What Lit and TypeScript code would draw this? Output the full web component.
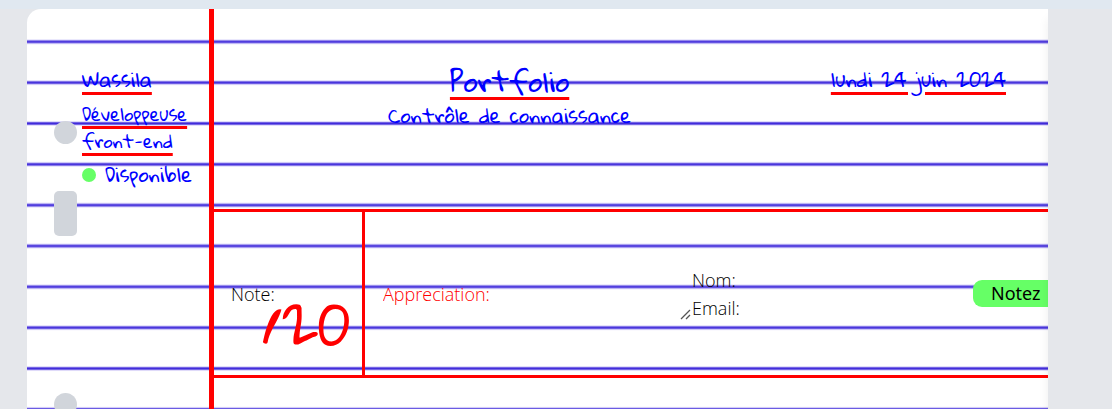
import { LitElement, html, css } from "lit";
import { customElement } from "lit/decorators.js";

@customElement("app-root")
export class AppRoot extends LitElement {
  static styles = css`
    :host {
      display: grid;
      grid-template-rows: 9px 1fr;
      height: 100vh;
      overflow: hidden;
      background: #e5e7eb;
      font-family: "Segoe UI", "Open Sans", "Noto Sans", sans-serif;
      font-size: 18px;
      line-height: 28px;
      color: #000;
    }
    * { box-sizing: border-box; }
    h1, h2, p { margin: 0; font-weight: 400; }
    .topbar { background: #e0e8f0; }
    .desk {
      display: grid;
      grid-template-columns: 27px minmax(0, 1fr) 64px;
      min-height: 0;
    }
    .sheet {
      position: relative;
      display: grid;
      grid-template-columns: 182px 5px minmax(0, 1fr);
      grid-column: 2;
      background: #fff;
      border-radius: 14px 0 0 0;
      overflow: hidden;
      min-height: 0;
    }
    .rules {
      position: absolute;
      inset: 0;
      width: 100%;
      height: 100%;
    }
    .edge {
      grid-column: 3;
      background: #e5e7eb;
      box-shadow: 0 10px 10px rgba(0, 0, 0, 0.07);
      z-index: 1;
    }
    .margin {
      position: relative;
      display: grid;
      grid-template-columns: 23px 1fr;
      gap: 5px;
      padding-left: 27px;
    }
    .holes {
      display: flex;
      flex-direction: column;
      padding-top: 112px;
    }
    .hole {
      flex: none;
      height: 23px;
      border-radius: 50%;
      background: #d1d5db;
    }
    .slot {
      flex: none;
      height: 45px;
      margin: 47px 0 157px;
      border-radius: 5px;
      background: #d1d5db;
    }
    .redline { position: relative; background: #f00; }
    .hand {
      font-family: "Gloria Hallelujah", "Lato", sans-serif;
      font-weight: 400;
      color: #00f;
    }
    .under {
      text-decoration: underline 3px #f00;
      text-underline-offset: 5px;
    }
    .who {
      padding-top: 56px;
      line-height: 27px;
      font-size: 18px;
    }
    .name { font-size: 20px; line-height: 28px; }
    .job { padding-top: 7px; }
    .free {
      display: flex;
      align-items: center;
      gap: 9px;
      padding-top: 7px;
      font-size: 20px;
    }
    .dot {
      width: 14px;
      height: 14px;
      border-radius: 50%;
      background: #6f6;
    }
    .content { position: relative; min-width: 0; }
    .head {
      display: flex;
      justify-content: space-between;
      height: 200px;
      padding: 56px 42px 0 174px;
    }
    .titles { text-align: center; }
    .title { font-size: 28px; line-height: 32px; }
    .subtitle { font-size: 20px; line-height: 36px; white-space: nowrap; }
    .date {
      font-size: 20px;
      line-height: 28px;
      white-space: nowrap;
    }
    .grade {
      display: grid;
      grid-template-columns: 151px minmax(0, 1fr);
      height: 169px;
      border-top: 3px solid #f00;
      border-bottom: 3px solid #f00;
      font-weight: 300;
    }
    .mark {
      position: relative;
      border-right: 3px solid #f00;
      padding: 68px 14px 0 17px;
    }
    .score { display: flex; }
    .field {
      flex: 1;
      min-width: 0;
      padding: 0;
      border: 0;
      background: none;
      font: inherit;
      color: inherit;
      outline: none;
    }
    .outof {
      position: absolute;
      right: 12px;
      top: 77px;
      font-family: "Gloria Hallelujah", "Lato", sans-serif;
      font-size: 55px;
      line-height: 70px;
      font-weight: 400;
      color: #f00;
    }
    .form {
      display: grid;
      grid-template-columns: 309px minmax(0, 1fr) 75px;
      padding: 54px 0 0 18px;
      align-items: start;
    }
    .box { position: relative; display: flex; }
    .grip {
      position: absolute;
      right: 0;
      bottom: 0;
      width: 12px;
      height: 12px;
      pointer-events: none;
    }
    .comment {
      flex: 1;
      height: 54px;
      padding: 14px 0 0;
      border: 0;
      background: none;
      font: inherit;
      line-height: 28px;
      color: #f00;
      outline: none;
      overflow: hidden;
      resize: none;
    }
    .comment::placeholder { color: #f00; opacity: 1; }
    .line { display: flex; gap: 4px; }
    .send {
      margin-top: 14px;
      height: 27px;
      padding: 0 0 0 18px;
      border: 0;
      border-radius: 9px 0 0 9px;
      background: #6f6;
      color: #000;
      font-family: "Noto Sans", sans-serif;
      font-size: 18px;
      line-height: 27px;
      text-align: left;
    }
  `;

  render() {
    return html`
      <div class="topbar"></div>
      <div class="desk">
        <main class="sheet">
          <svg class="rules" aria-hidden="true">
            <defs>
              <pattern id="rule" width="40" height="40.84" y="12.4" patternUnits="userSpaceOnUse">
                <rect y="18.4" width="40" height="4" fill="#3a20e0" opacity=".3" />
                <rect y="19.3" width="40" height="2.2" fill="#321cd8" opacity=".9" />
              </pattern>
            </defs>
            <rect width="100%" height="100%" fill="url(#rule)" />
          </svg>
          <aside class="margin">
            <div class="holes">
              <div class="hole"></div>
              <div class="slot"></div>
              <div class="hole"></div>
            </div>
            <div class="who hand">
              <p class="name"><span class="under">Wassila</span></p>
              <p class="job"><span class="under">Développeuse<br />front-end</span></p>
              <p class="free"><span class="dot"></span>Disponible</p>
            </div>
          </aside>
          <div class="redline"></div>
          <section class="content">
            <header class="head hand">
              <div class="titles">
                <h1 class="title"><span class="under">Portfolio</span></h1>
                <h2 class="subtitle">Contrôle de connaissance</h2>
              </div>
              <p class="date"><span class="under">lundi 24 juin 2024</span></p>
            </header>
            <div class="grade">
              <div class="mark">
                <div class="score">
                  <label for="note">Note:</label>
                  <input class="field" id="note" />
                </div>
                <span class="outof">/20</span>
              </div>
              <form class="form">
                <div class="box">
                  <textarea class="comment" aria-label="Appreciation" placeholder="Appreciation:"></textarea>
                  <svg class="grip" viewBox="0 0 12 12" aria-hidden="true">
                    <path d="M1 11 10 2M6 11 10 7" fill="none" stroke="#fff" stroke-width="3" />
                    <path d="M1 11 10 2M6 11 10 7" fill="none" stroke="#555" stroke-width="1.3" />
                  </svg>
                </div>
                <div>
                  <div class="line"><label for="nom">Nom:</label><input class="field" id="nom" /></div>
                  <div class="line"><label for="email">Email:</label><input class="field" id="email" type="email" /></div>
                </div>
                <button class="send" type="button">Notez</button>
              </form>
            </div>
          </section>
        </main>
        <div class="edge"></div>
      </div>
    `;
  }
}
